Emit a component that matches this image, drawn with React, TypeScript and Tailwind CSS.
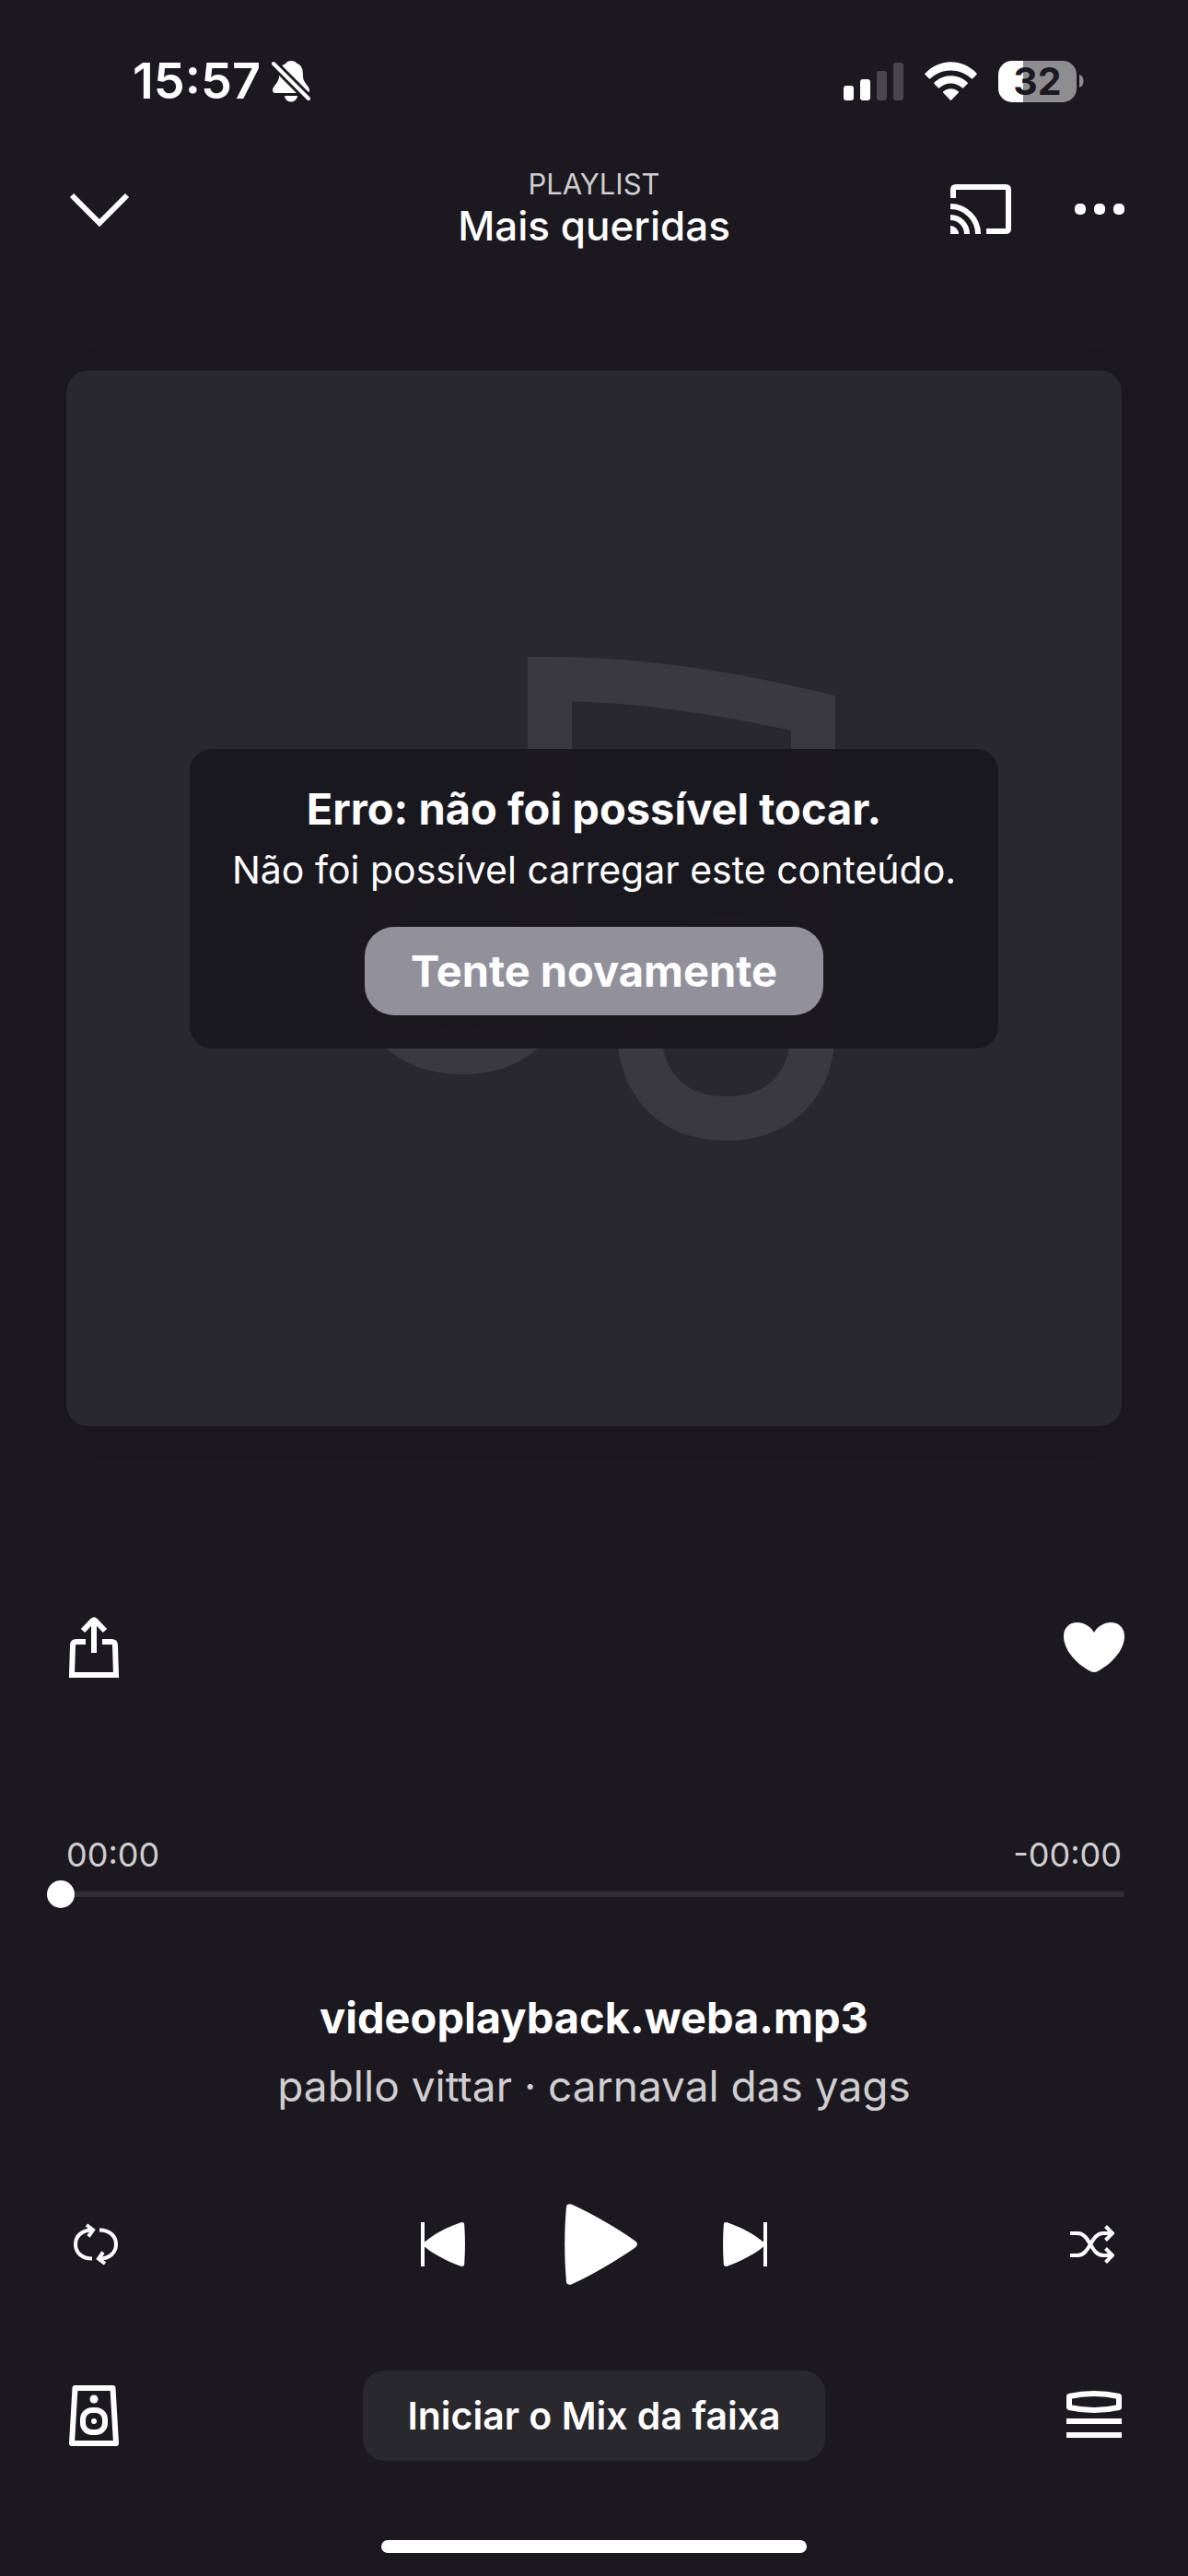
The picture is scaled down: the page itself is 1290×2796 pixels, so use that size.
import type { ReactNode } from "react";

function IconButton({ label, children }: { label: string; children: ReactNode }) {
  return (
    <button type="button" aria-label={label} className="block shrink-0">
      {children}
    </button>
  );
}

function StatusBar() {
  return (
    <div className="flex items-center justify-between pt-[65px] pr-[113px] pl-36">
      <div className="flex h-[46px] items-center gap-3">
        <span className="text-[54px] leading-none font-semibold">15:57</span>
        <svg width="42" height="46" viewBox="0 0 42 46" fill="none">
          <path
            d="M21 1c-3 0-5 1.500-6 3.200C8 6.500 8 12 8 18c0 7-7 10-7 15 0 2 1 3 3 3h34c2 0 3-1 3-3 0-5-7-8-7-15 0-8-1-12-7-14.500C26 2 24 1 21 1Z"
            fill="#fff"
          />
          <path d="M14 39h14c-.5 4-3.500 6.500-7 6.500S14.500 43 14 39Z" fill="#fff" />
          <path d="M2 4l38 38" stroke="#1b191f" strokeWidth="10" />
          <path d="M2 4l38 38" stroke="#fff" strokeWidth="4" strokeLinecap="round" />
        </svg>
      </div>
      <div className="flex h-[46px] items-center">
        <svg width="65" height="42" viewBox="0 0 65 42">
          <rect x="0" y="26" width="11" height="16" rx="3" fill="#fff" />
          <rect x="18" y="19" width="11" height="23" rx="3" fill="#fff" />
          <rect x="36" y="10" width="11" height="32" rx="3" fill="#49474c" />
          <rect x="54" y="1" width="11" height="41" rx="3" fill="#49474c" />
        </svg>
        <svg className="ml-[23px]" width="57" height="42" viewBox="0 0 57 42" fill="#fff">
          <path d="M0.600 12.500C16 -3.800 41 -3.800 56.400 12.500c.5.500.5 1 0 1.500l-4.200 4.200c-.5.500-1 .5-1.500 0C38.500 6.500 18.500 6.500 6.300 18.200c-.5.500-1 .5-1.500 0L.6 14c-.5-.5-.5-1 0-1.500Z" />
          <path d="M10.500 22.500c10.200-9.600 25.800-9.600 36 0 .5.500.5 1 0 1.500l-4.300 4.300c-.5.500-1 .5-1.500 0-7-6.300-17.400-6.300-24.400 0-.5.500-1 .5-1.500 0L10.500 24c-.5-.5-.5-1 0-1.500Z" />
          <path d="M20.300 32.200c4.700-4 11.700-4 16.400 0 .5.500.5 1 0 1.500l-7.500 7.700c-.5.500-1 .5-1.500 0l-7.400-7.700c-.5-.5-.5-1 0-1.500Z" />
        </svg>
        <div className="ml-[23px] flex h-[45px] w-[85px] items-center justify-center rounded-[15px] bg-linear-to-r from-white from-32% to-[#8e8d90] to-32% text-[41px] leading-none font-bold text-[#1b191f]">
          32
        </div>
        <svg className="ml-[3px]" width="5" height="14" viewBox="0 0 5 14">
          <path d="M0 0c6 1.500 6 12.500 0 14Z" fill="#8e8d90" />
        </svg>
      </div>
    </div>
  );
}

function Header() {
  return (
    <header className="mt-[69px] grid grid-cols-[1fr_auto_1fr] items-center px-[69px]">
      <IconButton label="Fechar">
        <svg width="78" height="42" viewBox="0 0 78 42" fill="none">
          <path d="M9 6l30 30L69 6" stroke="#fff" strokeWidth="6" />
        </svg>
      </IconButton>
      <div className="pb-1 text-center">
        <p className="text-[31px] leading-10 text-[#d0ced1]">PLAYLIST</p>
        <h1 className="text-[44px] leading-[50px] font-medium">Mais queridas</h1>
      </div>
      <div className="flex items-center justify-end gap-[69px]">
        <IconButton label="Transmitir">
          <svg width="66" height="54" viewBox="0 0 66 54" fill="none" stroke="#fff" strokeWidth="6">
            <path d="M3 15V6q0-3 3-3h54q3 0 3 3v42q0 3-3 3H39" />
            <path d="M0 24a30 30 0 0 1 30 30" />
            <path d="M0 36a18 18 0 0 1 18 18" />
            <path d="M0 45a9 9 0 0 1 9 9H0Z" fill="#fff" stroke="none" />
          </svg>
        </IconButton>
        <IconButton label="Mais opções">
          <svg width="54" height="12" viewBox="0 0 54 12" fill="#fff">
            <rect width="12" height="12" rx="5" />
            <rect x="21" width="12" height="12" rx="5" />
            <rect x="42" width="12" height="12" rx="5" />
          </svg>
        </IconButton>
      </div>
    </header>
  );
}

function Cover() {
  return (
    <section className="relative mx-[72px] mt-32 flex aspect-square items-center justify-center rounded-3xl bg-[#29282d] shadow-[0_6px_36px_rgba(0,0,0,0.1)]">
      <svg className="absolute inset-0 size-full" viewBox="72 402 1146 1146" fill="none">
        <path
          d="M597 1046V737C690 737 790 752 883 774V1116C883 1174 850 1214 788.500 1214S694 1174 694 1116S727 1018 788.500 1018S883 1058 883 1116M597 1046C597 1104 564 1142 502 1142S407 1104 407 1046S440 948 502 948S597 988 597 1046"
          stroke="#3a393e"
          strokeWidth="48"
        />
      </svg>
      <div
        role="alert"
        className="relative flex flex-col items-center rounded-3xl bg-[rgba(27,24,31,0.98)] px-[46px] pt-8 pb-9 text-center"
      >
        <h2 className="text-[47px] leading-[66px] font-bold">Erro: não foi possível tocar.</h2>
        <p className="text-[41px] leading-[66px]">Não foi possível carregar este conteúdo.</p>
        <button
          type="button"
          className="mt-[29px] h-24 rounded-4xl bg-[#92919b] px-[50px] text-[47px] leading-none font-bold"
        >
          Tente novamente
        </button>
      </div>
    </section>
  );
}

function Progress() {
  return (
    <div className="mt-[172px]">
      <div className="flex justify-between px-[72px] text-[36px] leading-10 text-[#d0ced1]">
        <span>00:00</span>
        <span>-00:00</span>
      </div>
      <div className="mt-2 pr-[69px] pl-[51px]">
        <input
          type="range"
          min={0}
          max={100}
          defaultValue={0}
          aria-label="Progresso da faixa"
          className="block h-[30px] w-full appearance-none bg-transparent [&::-webkit-slider-runnable-track]:h-[6px] [&::-webkit-slider-runnable-track]:rounded-full [&::-webkit-slider-runnable-track]:bg-[#302d34] [&::-webkit-slider-thumb]:-mt-3 [&::-webkit-slider-thumb]:size-[30px] [&::-webkit-slider-thumb]:appearance-none [&::-webkit-slider-thumb]:rounded-full [&::-webkit-slider-thumb]:bg-white"
        />
      </div>
    </div>
  );
}

function Controls() {
  return (
    <div className="mt-[98px] flex items-center justify-between px-20">
      <IconButton label="Repetir">
        <svg width="48" height="48" viewBox="0 0 48 48" fill="none" stroke="#fff" strokeWidth="4">
          <path d="M20 39.500C9 39.500 2 33 2 24S9 8.500 20 8.500" />
          <path d="M14 3l7 5.500-5 7" />
          <path d="M28 8.500c11 0 18 6.500 18 15.500s-7 15.500-18 15.500" />
          <path d="M34 45l-7-5.500 5-7" />
        </svg>
      </IconButton>
      <div className="flex items-center gap-[92px]">
        <IconButton label="Faixa anterior">
          <svg width="48" height="48" viewBox="0 0 48 48" fill="#fff">
            <path d="M0 0h4v21.500C14 13 29 5 43.500.200 45.500-.3 47 .5 47.200 2.500c1 14 1 29 0 43-.2 2-1.700 2.800-3.700 2.300C29 42.500 14 35 4 26.500V48H0Z" />
          </svg>
        </IconButton>
        <IconButton label="Tocar">
          <svg width="96" height="88" viewBox="0 0 96 88" fill="#fff">
            <path d="M18 3C18.300.500 21-.500 24 .800c24 11 48 25 68.500 39.500q5 3.700 0 7.400C71 62.500 48 76 24 87.200c-3 1.300-5.700.300-6-2.200-2.400-27-2.400-55 0-82Z" />
          </svg>
        </IconButton>
        <IconButton label="Próxima faixa">
          <svg width="48" height="48" viewBox="0 0 48 48" fill="#fff">
            <path d="M48 0h-4v21.500C34 13 19 5 4.500.200 2.500-.3 1 .5.800 2.500c-1 14-1 29 0 43 .2 2 1.700 2.800 3.700 2.300C19 42.500 34 35 44 26.500V48h4Z" />
          </svg>
        </IconButton>
      </div>
      <IconButton label="Aleatório">
        <svg width="48" height="48" viewBox="0 0 48 48" fill="none" stroke="#fff" strokeWidth="4">
          <path d="M0 12h8c14 0 14 24 28 24h10" />
          <path d="M0 36h8c14 0 14-24 28-24h10" />
          <path d="M38.500 4.500L46 12l-7.500 7.500M38.500 28.500L46 36l-7.500 7.500" />
        </svg>
      </IconButton>
    </div>
  );
}

function BottomBar() {
  return (
    <footer className="mt-[93px] flex items-center justify-between px-[69px]">
      <IconButton label="Dispositivos">
        <svg width="66" height="66" viewBox="0 0 66 66" fill="none" stroke="#fff" strokeWidth="6">
          <path d="M12.500 3h41L57 63H9Z" strokeLinejoin="round" />
          <rect x="21" y="27" width="24" height="24" rx="10" />
          <circle cx="33" cy="15" r="4.500" fill="#fff" stroke="none" />
          <circle cx="33" cy="39" r="3" fill="#fff" stroke="none" />
        </svg>
      </IconButton>
      <button
        type="button"
        className="h-[98px] rounded-3xl bg-[#29282d] px-12 text-[41px] leading-none font-semibold"
      >
        Iniciar o Mix da faixa
      </button>
      <IconButton label="Fila de reprodução">
        <svg width="66" height="66" viewBox="0 0 66 66" fill="none" stroke="#fff" strokeWidth="6">
          <path d="M6 12q27-6 54 0v12q-27 6-54 0Z" strokeLinejoin="round" />
          <path d="M3 39h60M3 54h60" />
        </svg>
      </IconButton>
    </footer>
  );
}

export default function App() {
  return (
    <main className="flex min-h-screen flex-col bg-[#1b191f] font-['Inter','Liberation_Sans',sans-serif] text-white">
      <StatusBar />
      <Header />
      <Cover />
      <div className="mt-[207px] flex justify-between px-[69px]">
        <IconButton label="Compartilhar">
          <svg width="66" height="66" viewBox="0 0 66 66" fill="none" stroke="#fff" strokeWidth="6">
            <path d="M24 27H14q-4 0-4 4L9 63h48l-1-32q0-4-4-4H42" />
            <path d="M33 39V4M21 15L31.500 4q1.500-1.500 3 0L45 15" />
          </svg>
        </IconButton>
        <IconButton label="Remover das favoritas">
          <svg width="66" height="66" viewBox="0 0 66 66" fill="#fff">
            <path d="M33 17C29 10 22 6 15 6 6 6 0 12 0 21c0 15 14 30 29 38q4 2 8 0c15-8 29-23 29-38 0-9-6-15-15-15-7 0-14 4-18 11Z" />
          </svg>
        </IconButton>
      </div>
      <Progress />
      <div className="mt-[89px] text-center">
        <h2 className="text-[47px] leading-[60px] font-bold">videoplayback.weba.mp3</h2>
        <p className="mt-[14px] text-[46px] leading-[60px] text-[#d0ced1]">
          pabllo vittar · carnaval das yags
        </p>
      </div>
      <Controls />
      <BottomBar />
      <div className="mx-auto mt-[86px] h-[14px] w-[462px] rounded-full bg-white" />
    </main>
  );
}
